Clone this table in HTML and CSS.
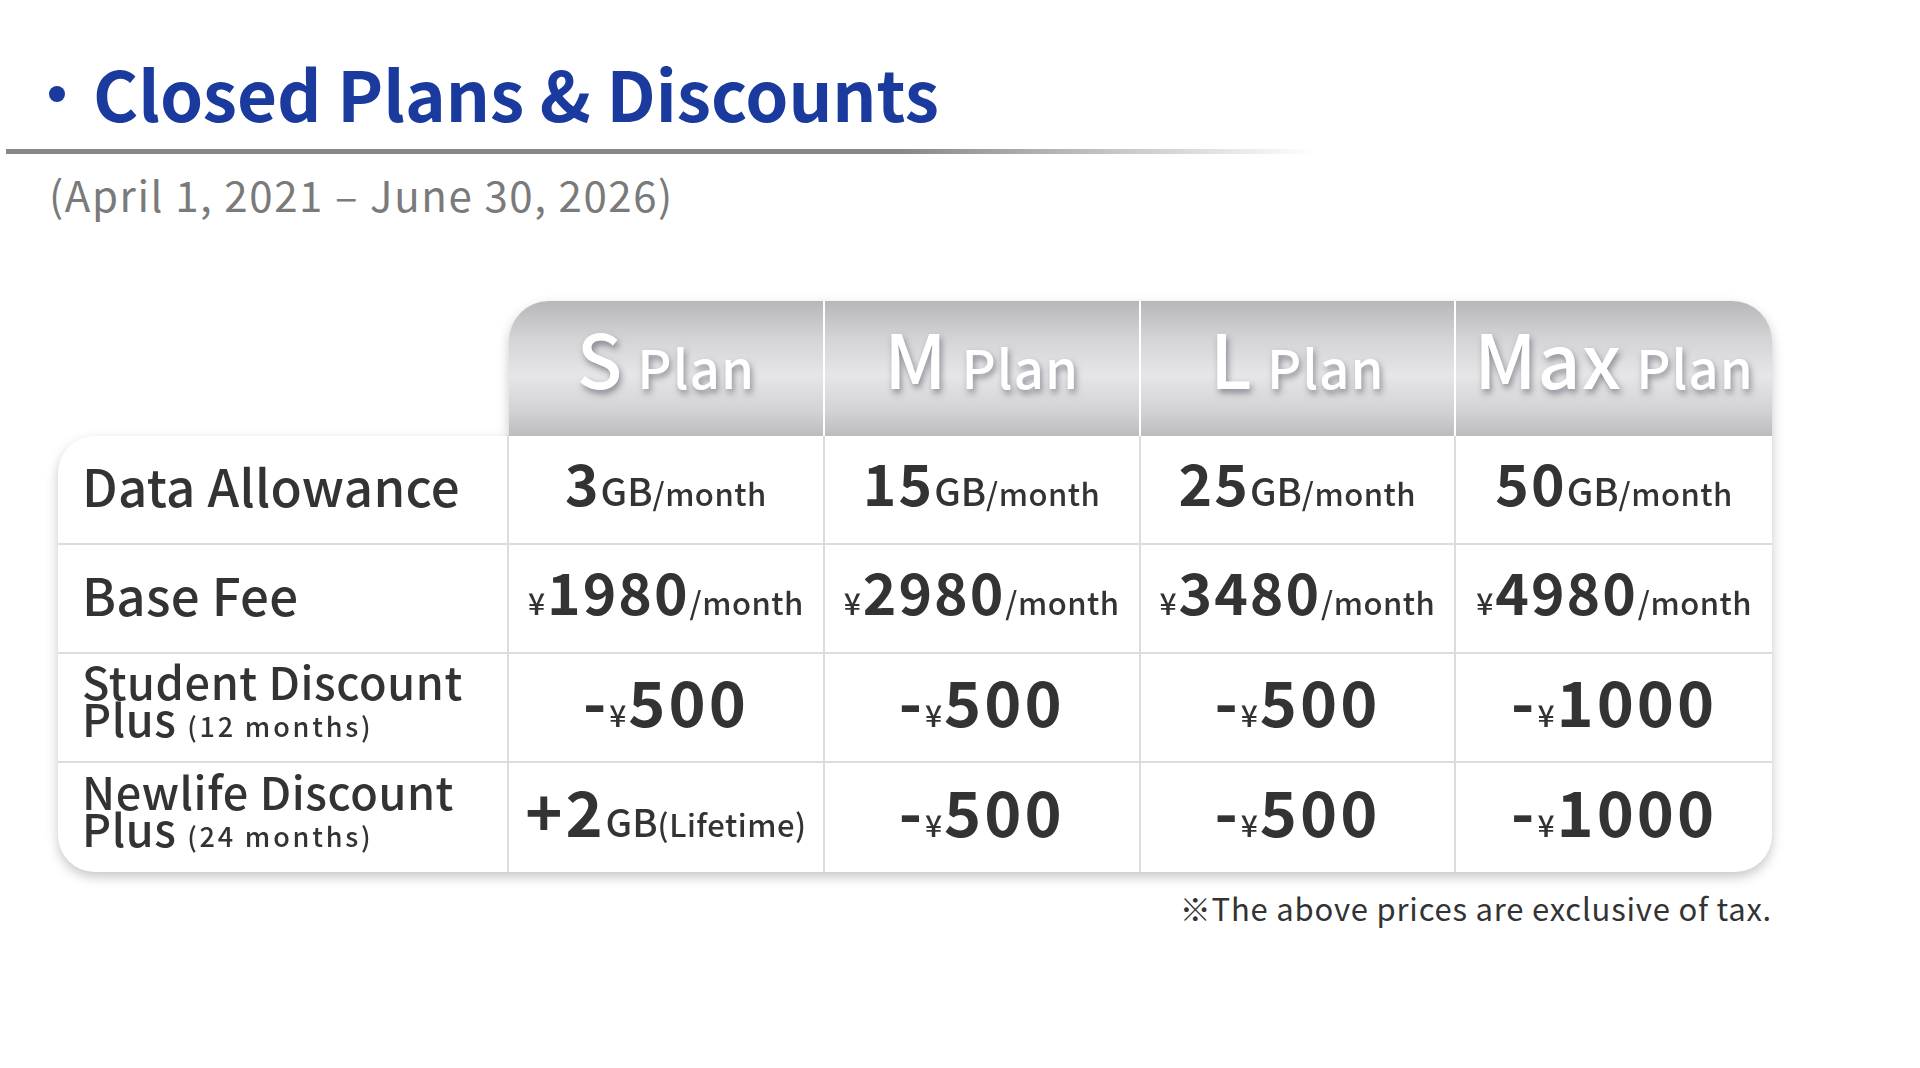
FILE: index.html
```html
<!DOCTYPE html>
<html lang="en">
<head>
<meta charset="utf-8">
<title>Closed Plans &amp; Discounts</title>
<link rel="stylesheet" href="styles.css">
</head>
<body>
<div class="page">
  <h1 class="title"><span class="bullet"></span>Closed Plans &amp; Discounts</h1>
  <div class="rule"></div>
  <p class="period">(April 1, 2021 – June 30, 2026)</p>

  <div class="table">
    <div class="head">
      <div class="hcell first"><span class="hv"><span class="hbig">S</span><span class="hsmall">Plan</span></span></div>
      <div class="hcell"><span class="hv"><span class="hbig">M</span><span class="hsmall">Plan</span></span></div>
      <div class="hcell"><span class="hv"><span class="hbig">L</span><span class="hsmall">Plan</span></span></div>
      <div class="hcell last"><span class="hv"><span class="hbig">Max</span><span class="hsmall">Plan</span></span></div>
    </div>
    <div class="body">
      <div class="cell label">Data Allowance</div>
      <div class="cell val"><span class="v"><span class="big">3</span><span class="unit">GB</span><span class="per">/month</span></span></div>
      <div class="cell val"><span class="v"><span class="big">15</span><span class="unit">GB</span><span class="per">/month</span></span></div>
      <div class="cell val"><span class="v"><span class="big">25</span><span class="unit">GB</span><span class="per">/month</span></span></div>
      <div class="cell val lastcol"><span class="v"><span class="big">50</span><span class="unit">GB</span><span class="per">/month</span></span></div>

      <div class="cell label">Base Fee</div>
      <div class="cell val"><span class="v"><span class="yen">¥</span><span class="big">1980</span><span class="per">/month</span></span></div>
      <div class="cell val"><span class="v"><span class="yen">¥</span><span class="big">2980</span><span class="per">/month</span></span></div>
      <div class="cell val"><span class="v"><span class="yen">¥</span><span class="big">3480</span><span class="per">/month</span></span></div>
      <div class="cell val lastcol"><span class="v"><span class="yen">¥</span><span class="big">4980</span><span class="per">/month</span></span></div>

      <div class="cell label two"><span class="ln">Student Discount</span><span class="ln">Plus <small>(12 months)</small></span></div>
      <div class="cell val"><span class="v"><span class="bigger">-</span><span class="yen">¥</span><span class="bigger">500</span></span></div>
      <div class="cell val"><span class="v"><span class="bigger">-</span><span class="yen">¥</span><span class="bigger">500</span></span></div>
      <div class="cell val"><span class="v"><span class="bigger">-</span><span class="yen">¥</span><span class="bigger">500</span></span></div>
      <div class="cell val lastcol"><span class="v"><span class="bigger">-</span><span class="yen">¥</span><span class="bigger">1000</span></span></div>

      <div class="cell label two lastrow"><span class="ln">Newlife Discount</span><span class="ln">Plus <small>(24 months)</small></span></div>
      <div class="cell val lastrow"><span class="v"><span class="bigger">+2</span><span class="unit">GB</span><span class="per">(Lifetime)</span></span></div>
      <div class="cell val lastrow"><span class="v"><span class="bigger">-</span><span class="yen">¥</span><span class="bigger">500</span></span></div>
      <div class="cell val lastrow"><span class="v"><span class="bigger">-</span><span class="yen">¥</span><span class="bigger">500</span></span></div>
      <div class="cell val lastrow lastcol"><span class="v"><span class="bigger">-</span><span class="yen">¥</span><span class="bigger">1000</span></span></div>
    </div>
  </div>
  <p class="note">※The above prices are exclusive of tax.</p>
</div>
</body>
</html>
```

FILE: styles.css
```css
html, body {
  margin: 0;
  padding: 0;
  background: #ffffff;
}

body {
  width: 1920px;
  height: 1068px;
  overflow: hidden;
  font-family: "Noto Sans CJK JP", "Noto Sans", sans-serif;
  color: #333333;
}

.page {
  padding-top: 53px;
}

.title {
  margin: 0 0 0 49px;
  display: flex;
  align-items: center;
  height: 78px;
  font-size: 69px;
  font-weight: 700;
  line-height: 1;
  color: #1a3a9e;
}

.bullet {
  width: 16px;
  height: 16px;
  border-radius: 50%;
  background: #1a3a9e;
  margin-right: 28px;
  margin-top: 4px;
  flex: none;
}

.rule {
  margin: 18px 0 0 6px;
  width: 1310px;
  height: 5px;
  background: linear-gradient(to right, #878787 0%, #878787 68%, rgba(135,135,135,0) 100%);
}

.period {
  margin: 15px 0 0 49px;
  font-size: 42px;
  line-height: 50px;
  color: #7a7a7a;
  letter-spacing: 1.6px;
}

.table {
  margin: 82px 0 0 58px;
  width: 1714px;
  filter: drop-shadow(0 5px 6px rgba(0, 0, 0, 0.22));
}

.head {
  display: grid;
  grid-template-columns: repeat(4, 1fr);
  margin-left: 451px;
  height: 135px;
}

.hcell {
  display: flex;
  align-items: center;
  justify-content: center;
  padding-bottom: 24px;
  box-sizing: border-box;
  background: linear-gradient(to bottom, #b7b7bb 0%, #d4d4d7 28%, #e6e6e8 55%, #d2d2d5 82%, #bbbbc0 100%);
  border-right: 2px solid #ffffff;
  color: #ffffff;
  text-shadow: 2px 4px 6px rgba(70, 70, 85, 0.55);
}

.hcell.first {
  border-top-left-radius: 40px;
}

.hcell.last {
  border-right: none;
  border-top-right-radius: 40px;
}

.hv {
  line-height: 1;
  white-space: nowrap;
}

.hbig {
  font-size: 75px;
  font-weight: 500;
  letter-spacing: 1px;
}

.hsmall {
  font-size: 53px;
  font-weight: 500;
  margin-left: 14px;
  letter-spacing: 1px;
}

.body {
  display: grid;
  grid-template-columns: 451px repeat(4, 1fr);
  grid-auto-rows: 109px;
  background: #ffffff;
  border-radius: 37px 0 37px 37px;
  overflow: hidden;
}

.cell {
  border-right: 2px solid #dcdcdf;
  border-bottom: 2px solid #dcdcdf;
  display: flex;
  align-items: center;
  box-sizing: border-box;
}

.cell.lastcol {
  border-right: none;
}

.cell.lastrow {
  border-bottom: none;
}

.label {
  padding-left: 24px;
  padding-bottom: 9px;
  font-size: 51px;
  font-weight: 500;
  letter-spacing: 0.3px;
  color: #333333;
  white-space: nowrap;
}

.label.two {
  flex-direction: column;
  align-items: flex-start;
  justify-content: center;
  font-size: 45px;
  letter-spacing: 0.6px;
  padding-bottom: 18px;
}

.ln {
  display: block;
  height: 37px;
  line-height: 37px;
}

.label small {
  font-size: 27px;
  letter-spacing: 2.8px;
}

.val {
  justify-content: center;
  color: #333333;
}

.v {
  line-height: 1;
  white-space: nowrap;
  padding-bottom: 16px;
}

.big {
  font-size: 57px;
  font-weight: 700;
  letter-spacing: 2px;
}

.bigger {
  font-size: 63px;
  font-weight: 700;
  letter-spacing: 3px;
}

.unit {
  font-size: 38px;
  font-weight: 500;
}

.yen {
  font-size: 30px;
  font-weight: 500;
  margin-right: 2px;
}

.per {
  font-size: 31px;
  font-weight: 500;
  letter-spacing: 0.5px;
}

.note {
  margin: 18px 0 0 0;
  width: 1772px;
  text-align: right;
  font-size: 31px;
  line-height: 36px;
  color: #333333;
  letter-spacing: 0.8px;
}
```
